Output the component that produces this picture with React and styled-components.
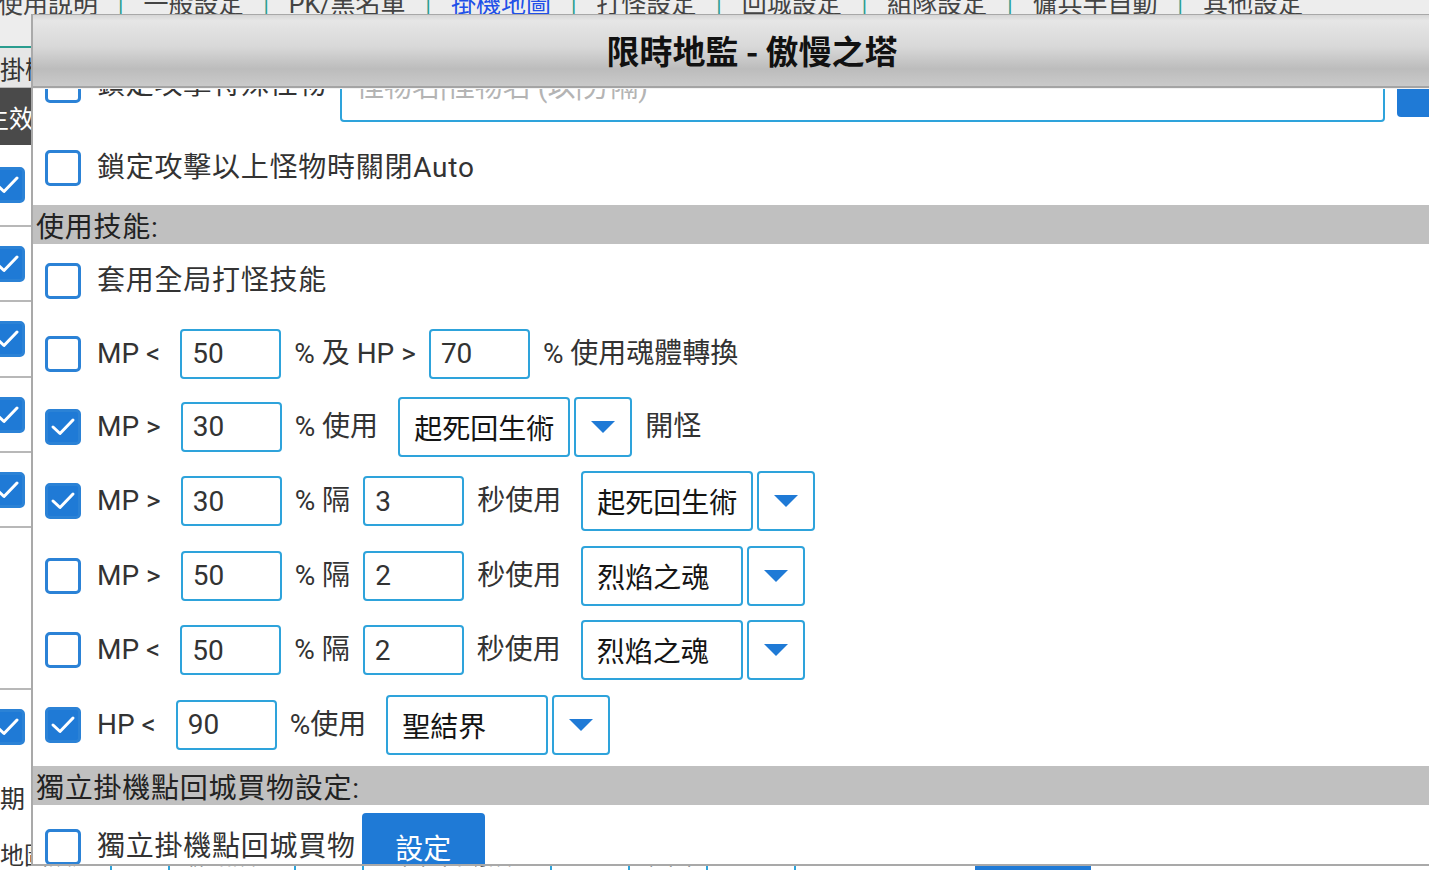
import React from "react";
import styled, { createGlobalStyle } from "styled-components";

const GlobalStyle = createGlobalStyle`
  *, *::before, *::after {
    box-sizing: border-box;
  }
  html, body {
    margin: 0;
    padding: 0;
    overflow: hidden;
  }
  body {
    font-family: Roboto, "Noto Sans CJK TC", "Noto Sans", sans-serif;
    color: #333;
    background: #fff;
  }
`;

/* ---------- background page (behind the dialog) ---------- */

const Page = styled.div`
  height: 870px;
  overflow: hidden;
  background: #fff;
`;

const TabBar = styled.div`
  display: flex;
  align-items: flex-start;
  height: 58px;
  margin-top: -10px;
  background: #ededed;
  border-bottom: 2px solid #2a9d8f;
  font-size: 25px;
  line-height: 30px;
  white-space: nowrap;
`;

const Tab = styled.span`
  color: ${(p) => (p.$active ? "#2150e8" : "#444")};
  &:first-child {
    margin-left: -2px;
  }
`;

const TabSep = styled.span`
  color: #2a9d8f;
  font-size: 22px;
  margin: 0 20px;
`;

const SideHead = styled.div`
  height: 40px;
  display: flex;
  align-items: center;
  background: #e6e6e6;
  border-bottom: 1px solid #b5b5b5;
  font-size: 25px;
  color: #333;
  white-space: nowrap;
`;

const SideBar = styled.div`
  height: 57px;
  display: flex;
  align-items: center;
  background: #4a4a4a;
  color: #fff;
  font-size: 25px;
  white-space: nowrap;
  span {
    margin-left: -16px;
  }
`;

const SideRow = styled.div`
  height: ${(p) => p.$h}px;
  display: flex;
  align-items: center;
  border-bottom: ${(p) => (p.$line ? "2px solid #b8b8b8" : "none")};
  font-size: 25px;
  color: #333;
  white-space: nowrap;
  & > .shift {
    margin-left: ${(p) => p.$shift || 0}px;
  }
`;

const BottomRow = styled.div`
  display: flex;
  align-items: flex-start;
  gap: 14px;
  padding-top: 6px;
  font-size: 24px;
  color: #333;
  white-space: nowrap;
`;

const MiniSelect = styled.span`
  display: inline-block;
  width: ${(p) => p.$w}px;
  height: 40px;
  border: 2px solid #2ea3db;
  border-radius: 4px;
`;

const MiniButton = styled.span`
  display: inline-block;
  width: 116px;
  height: 44px;
  margin-left: ${(p) => p.$ml}px;
  background: #1f7ad6;
  border-radius: 4px;
`;

/* ---------- dialog ---------- */

const Dialog = styled.div`
  position: fixed;
  left: 31px;
  top: 14px;
  width: 1440px;
  height: 852px;
  display: flex;
  flex-direction: column;
  background: #fff;
  border-top: 1px solid #a8a8a8;
  border-left: 2px solid #a9a9a9;
  border-bottom: 2px solid #a9a9a9;
`;

const Header = styled.div`
  height: 73px;
  flex: none;
  display: flex;
  align-items: center;
  justify-content: center;
  background: linear-gradient(
    to bottom,
    #d6d6d6 0%,
    #e6e6e6 8%,
    #d8d8d8 45%,
    #bcbcbc 76%,
    #cacaca 100%
  );
  border-bottom: 2px solid #a4a4a4;
  box-shadow: 0 1px 0 #f2f2f2;
  position: relative;
  z-index: 1;
`;

const Title = styled.h1`
  margin: 0;
  font-family: "Noto Sans CJK TC", sans-serif;
  font-size: 33px;
  font-weight: 700;
  line-height: 40px;
  color: #111;
  transform: translateY(-1px);
`;

const Body = styled.div`
  flex: 1;
  overflow: hidden;
`;

const Scroll = styled.div`
  margin-top: -31px;
`;

const Row = styled.div`
  height: ${(p) => p.$h || 74}px;
  display: flex;
  align-items: ${(p) => (p.$top ? "flex-start" : "center")};
  padding-top: ${(p) => (p.$top ? 10 : 0)}px;
  padding-left: 12px;
  font-size: 28px;
  color: #333;
  white-space: nowrap;
`;

const Section = styled.div`
  height: 39px;
  margin-top: ${(p) => p.$mt || 0}px;
  display: flex;
  align-items: center;
  padding-left: 3px;
  background: #c0c0c0;
  font-size: 28px;
  letter-spacing: 0.75px;
  color: #222;
`;

const Box = styled.span`
  flex: none;
  width: 36px;
  height: 36px;
  margin-right: 16px;
  border-radius: 5px;
  border: 3px solid #2b82d6;
  background: ${(p) => (p.$on ? "#1f7ad6" : "#fff")};
  display: inline-flex;
  align-items: center;
  justify-content: center;
  &.bg {
    margin-left: -11px;
  }
`;

const Label = styled.span`
  line-height: 36px;
  margin-right: ${(p) => (p.$mr === undefined ? 13 : p.$mr)}px;
  letter-spacing: ${(p) => (p.$wide ? "0.75px" : "normal")};
`;

const Field = styled.span`
  flex: none;
  width: ${(p) => p.$w || 101}px;
  height: ${(p) => p.$h || 50}px;
  margin-right: ${(p) => (p.$mr === undefined ? 13 : p.$mr)}px;
  display: inline-flex;
  align-items: ${(p) => (p.$placeholder ? "flex-start" : "center")};
  line-height: ${(p) => (p.$placeholder ? "30px" : "normal")};
  padding: ${(p) => (p.$placeholder ? "4px 14px 0" : "0 10px")};
  border: 2px solid #2ea3db;
  border-radius: 4px;
  color: ${(p) => (p.$placeholder ? "#b4b4b4" : "#333")};
  font-size: 28px;
  overflow: hidden;
`;

const Select = styled.span`
  flex: none;
  min-width: 162px;
  height: 60px;
  margin-left: 7px;
  display: inline-flex;
  align-items: center;
  padding: 0 14px;
  border: 2px solid #2ea3db;
  border-radius: 4px;
  color: #151515;
  font-family: "Noto Sans CJK TC", sans-serif;
  font-size: 28px;
`;

const DropButton = styled.span`
  flex: none;
  width: 58px;
  height: 60px;
  margin-left: 4px;
  margin-right: 13px;
  display: inline-flex;
  align-items: center;
  justify-content: center;
  border: 2px solid #2ea3db;
  border-radius: 4px;
  &::after {
    content: "";
    border-left: 12px solid transparent;
    border-right: 12px solid transparent;
    border-top: 12px solid #1f7ad6;
  }
`;

const BlueButton = styled.span`
  flex: none;
  width: ${(p) => p.$w}px;
  height: ${(p) => p.$h}px;
  margin-left: ${(p) => p.$ml}px;
  display: inline-flex;
  align-items: center;
  justify-content: center;
  background: #1f7ad6;
  border-radius: 4px;
  color: #fff;
  font-size: 28px;
`;

function Check({ on, bg }) {
  return (
    <Box $on={on} className={bg ? "bg" : undefined}>
      {on && (
        <svg width="26" height="22" viewBox="0 0 26 22">
          <polyline
            points="3,11 10,17.5 23,4"
            fill="none"
            stroke="#fff"
            strokeWidth="3"
            strokeLinecap="round"
            strokeLinejoin="round"
          />
        </svg>
      )}
    </Box>
  );
}

function SkillSelect({ name }) {
  return (
    <>
      <Select>{name}</Select>
      <DropButton />
    </>
  );
}

const tabs = [
  "使用說明",
  "一般設定",
  "PK/黑名單",
  "掛機地圖",
  "打怪設定",
  "回城設定",
  "組隊設定",
  "傭兵半自動",
  "其他設定",
];

function Background() {
  return (
    <Page>
      <TabBar>
        {tabs.map((t, i) => (
          <React.Fragment key={t}>
            {i > 0 && <TabSep>|</TabSep>}
            <Tab $active={t === "掛機地圖"}>{t}</Tab>
          </React.Fragment>
        ))}
      </TabBar>
      <SideHead>掛機地圖</SideHead>
      <SideBar>
        <span>生效</span>
      </SideBar>
      <SideRow $h={82} $line>
        <Check on bg />
      </SideRow>
      <SideRow $h={75} $line>
        <Check on bg />
      </SideRow>
      <SideRow $h={76} $line>
        <Check on bg />
      </SideRow>
      <SideRow $h={75} $line>
        <Check on bg />
      </SideRow>
      <SideRow $h={75} $line>
        <Check on bg />
      </SideRow>
      <SideRow $h={162} $line />
      <SideRow $h={74}>
        <Check on bg />
      </SideRow>
      <SideRow $h={66} $shift={-25}>
        <span className="shift">日期</span>
      </SideRow>
      <BottomRow>
        <span>地圖設定</span>
        <MiniSelect $w={60} />
        <span>聯點設置</span>
        <MiniSelect $w={70} />
        <span>地圖</span>
        <span>自動設置</span>
        <MiniSelect $w={80} />
        <span>範圍</span>
        <MiniSelect $w={90} />
        <MiniButton $ml={165} />
      </BottomRow>
    </Page>
  );
}

export default function App() {
  return (
    <>
      <GlobalStyle />
      <Background />
      <Dialog>
        <Header>
          <Title>限時地監 - 傲慢之塔</Title>
        </Header>
        <Body>
          <Scroll>
            <Row $top>
              <Check />
              <Label $wide>鎖定攻擊特殊怪物</Label>
              <Field $w={1045} $h={55} $mr={0} $placeholder>
                怪物名|怪物名 (以|分隔)
              </Field>
              <BlueButton $w={120} $h={50} $ml={12}>
                新增
              </BlueButton>
            </Row>
            <Row>
              <Check />
              <Label $wide>鎖定攻擊以上怪物時關閉Auto</Label>
            </Row>
            <Section>使用技能:</Section>
            <Row>
              <Check />
              <Label $wide>套用全局打怪技能</Label>
            </Row>
            <Row $h={71}>
              <Check />
              <Label>{"MP <\u00a0"}</Label>
              <Field>50</Field>
              <Label>% 及 HP &gt;</Label>
              <Field>70</Field>
              <Label>% 使用魂體轉換</Label>
            </Row>
            <Row $h={75}>
              <Check on />
              <Label>{"MP >\u00a0"}</Label>
              <Field>30</Field>
              <Label>% 使用</Label>
              <SkillSelect name="起死回生術" />
              <Label>開怪</Label>
            </Row>
            <Row>
              <Check on />
              <Label>{"MP >\u00a0"}</Label>
              <Field>30</Field>
              <Label>% 隔</Label>
              <Field>3</Field>
              <Label>秒使用</Label>
              <SkillSelect name="起死回生術" />
            </Row>
            <Row $h={75}>
              <Check />
              <Label>{"MP >\u00a0"}</Label>
              <Field>50</Field>
              <Label>% 隔</Label>
              <Field>2</Field>
              <Label>秒使用</Label>
              <SkillSelect name="烈焰之魂" />
            </Row>
            <Row>
              <Check />
              <Label>{"MP <\u00a0"}</Label>
              <Field>50</Field>
              <Label>% 隔</Label>
              <Field>2</Field>
              <Label>秒使用</Label>
              <SkillSelect name="烈焰之魂" />
            </Row>
            <Row $h={75}>
              <Check on />
              <Label>{"HP <\u00a0"}</Label>
              <Field>90</Field>
              <Label>%使用</Label>
              <SkillSelect name="聖結界" />
            </Row>
            <Section $mt={4}>獨立掛機點回城買物設定:</Section>
            <Row $h={84}>
              <Check />
              <Label $wide $mr={0}>
                獨立掛機點回城買物
              </Label>
              <BlueButton $w={123} $h={68} $ml={6}>
                設定
              </BlueButton>
            </Row>
          </Scroll>
        </Body>
      </Dialog>
    </>
  );
}
